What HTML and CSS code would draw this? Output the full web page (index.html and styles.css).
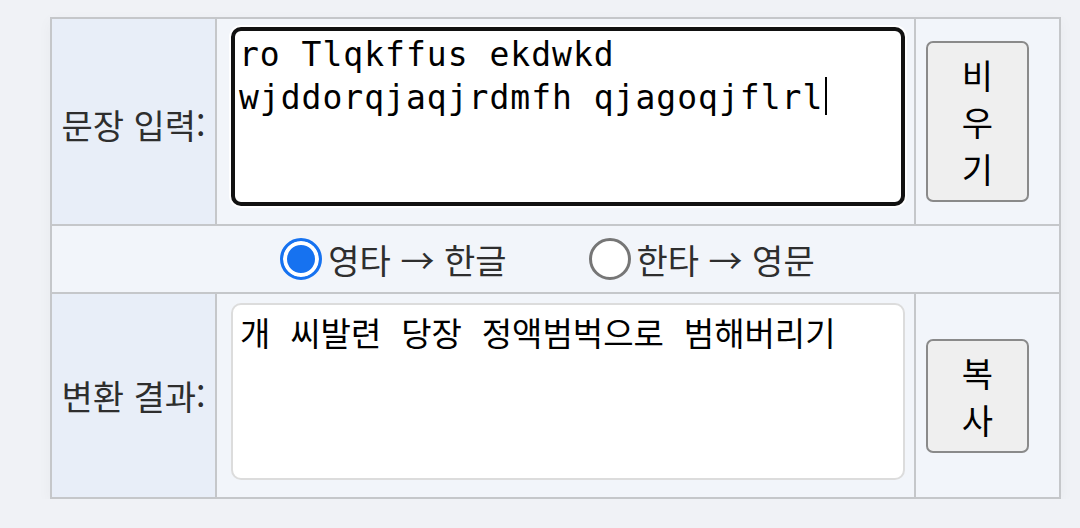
FILE: index.html
```html
<!DOCTYPE html>
<html lang="ko">
<head>
  <meta charset="UTF-8" />
  <meta name="viewport" content="width=device-width, initial-scale=1.0"/>
  <title>영타 한글 변환</title>
  <link rel="stylesheet" href="styles.css">
</head>
<body>

<div class="page">
  <div class="converter">
    <div class="label-cell first">문장 입력:</div>
    <div class="field-cell top">
      <div class="input-wrap">
        <textarea class="text-box active" id="source" spellcheck="false">ro Tlqkffus ekdwkd wjddorqjaqjrdmfh qjagoqjflrl</textarea>
        <span class="caret"></span>
      </div>
    </div>
    <div class="button-cell">
      <button class="side-btn" id="clearBtn">비우기</button>
    </div>

    <div class="mode-row">
      <label class="mode"><input type="radio" name="mode" value="en2ko" checked><span>영타 → 한글</span></label>
      <label class="mode"><input type="radio" name="mode" value="ko2en"><span>한타 → 영문</span></label>
    </div>

    <div class="label-cell">변환 결과:</div>
    <div class="field-cell bottom">
      <textarea class="text-box result" id="result" spellcheck="false" readonly>개 씨발련 당장 정액범벅으로 범해버리기</textarea>
    </div>
    <div class="button-cell">
      <button class="side-btn" id="copyBtn">복사</button>
    </div>
  </div>
</div>

</body>
</html>
```

FILE: styles.css
```css
:root {
  --page-bg: #f0f2f6;
  --cell-bg: #f2f5fa;
  --label-bg: #e8eef8;
  --line: #c5c7ca;
  --text: #2e2e2e;
  --accent: #1672f0;
}

* {
  box-sizing: border-box;
  margin: 0;
  padding: 0;
}

body {
  background: var(--page-bg);
  font-family: "Noto Sans CJK KR", "Noto Sans", sans-serif;
  color: var(--text);
}

.page {
  padding: 17px 0 0 50px;
}

.converter {
  display: grid;
  grid-template-columns: 163px 697px 143px;
  grid-template-rows: 205px 66px 203px;
  gap: 2px;
  padding: 2px;
  width: fit-content;
  background: var(--line);
  box-shadow: 0 4px 14px rgba(0, 0, 0, 0.04);
}

.label-cell {
  display: flex;
  align-items: center;
  justify-content: center;
  background: var(--label-bg);
  font-size: 34px;
  color: var(--text);
}

.label-cell.first {
  padding-top: 6px;
}

.field-cell {
  background: var(--cell-bg);
  padding: 8px 9px 0 14px;
}

.field-cell.bottom {
  padding-top: 9px;
}

.input-wrap {
  position: relative;
}

.text-box {
  display: block;
  width: 100%;
  height: 179px;
  resize: none;
  outline: none;
  background: #fff;
  color: #000;
  border-radius: 10px;
}

.text-box.active {
  border: 4px solid #111;
  padding: 2px 4px;
  font-family: "DejaVu Sans Mono", monospace;
  font-size: 33px;
  letter-spacing: 1px;
  line-height: 43px;
  box-shadow: 0 0 0 2px rgba(255, 255, 255, 0.9);
}

.text-box.result {
  height: 177px;
  border: 2px solid #dcdcdc;
  padding: 8px 7px 4px;
  font-family: "DejaVu Sans Mono", "Noto Sans CJK KR", monospace;
  font-size: 33px;
  line-height: 43px;
}

.caret {
  position: absolute;
  left: 594px;
  top: 50px;
  width: 2px;
  height: 38px;
  background: #000;
}

.button-cell {
  display: flex;
  align-items: center;
  padding-left: 10px;
  background: var(--cell-bg);
}

.side-btn {
  width: 103px;
  padding: 8px 20px;
  border: 2px solid #8a8a8a;
  border-radius: 7px;
  background: #efefef;
  color: #000;
  font-family: "Noto Sans CJK KR", sans-serif;
  font-size: 34px;
  line-height: 47px;
  word-break: break-all;
  cursor: pointer;
}

.mode-row {
  grid-column: 1 / -1;
  display: flex;
  align-items: center;
  justify-content: center;
  gap: 82px;
  padding-right: 16px;
  background: var(--cell-bg);
}

.mode {
  display: flex;
  align-items: center;
  gap: 6px;
  font-size: 34px;
  color: var(--text);
  cursor: pointer;
}

.mode input {
  appearance: none;
  width: 42px;
  height: 42px;
  margin: 0;
  border: 3px solid #767676;
  border-radius: 50%;
  background: #fff;
}

.mode input:checked {
  border-color: var(--accent);
  background: var(--accent);
  box-shadow: inset 0 0 0 4px #fff;
}
```
